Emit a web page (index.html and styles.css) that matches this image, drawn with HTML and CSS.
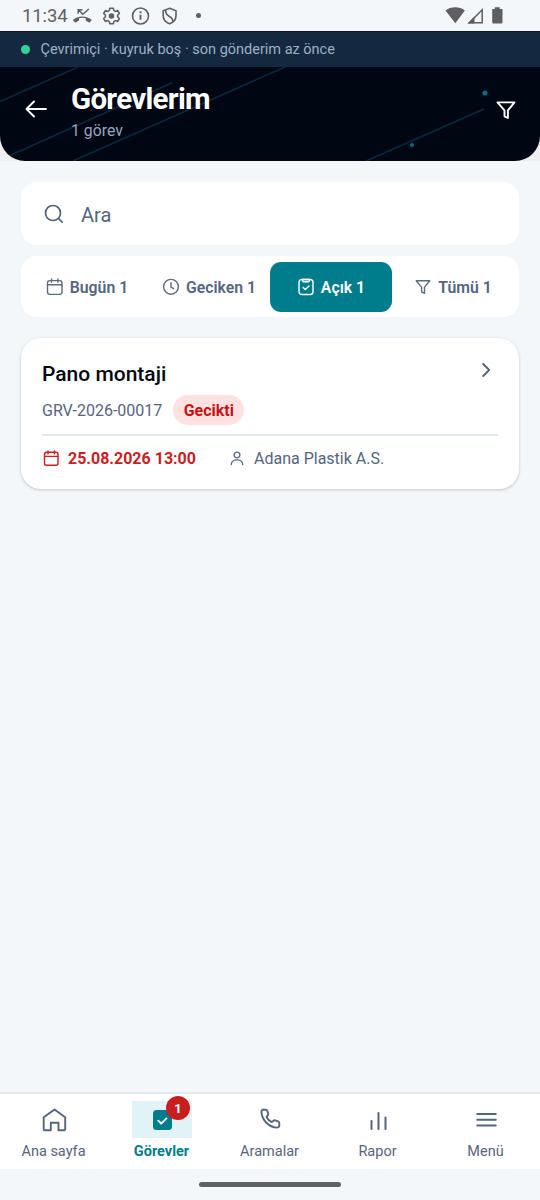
FILE: index.html
```html
<!DOCTYPE html>
<html lang="tr">
<head>
<meta charset="utf-8">
<title>Görevlerim</title>
<link rel="stylesheet" href="styles.css">
</head>
<body>
<div class="screen">
  <div class="status">
    <span class="clock">11:34</span>
    <svg class="status-left" width="140" height="31" viewBox="70 0 140 31" fill="none" stroke="#5f5f61" stroke-width="1.600">
      <path d="M78.200 13.700V9.700h4.300M78.600 10l4.200 4.200 6-5.200" stroke-width="1.500"/>
      <path d="M72.800 20.100c4.900-4.700 14.200-4.700 19.100 0l-2.600 2.700-3.600-2.200v-2.300c-2.200-.7-4.500-.7-6.700 0v2.300l-3.600 2.200z" fill="#5f5f61" stroke="none"/>
      <path d="M109.800 8.200h3.500l.5 2.200 1.700 1 2.200-.8 1.700 2.900-1.700 1.500v2l1.700 1.500-1.700 2.900-2.200-.8-1.700 1-.5 2.200h-3.500l-.5-2.200-1.700-1-2.200.8-1.700-2.900 1.700-1.500v-2l-1.700-1.500 1.700-2.900 2.200.8 1.700-1z" stroke-linejoin="round"/>
      <circle cx="111.500" cy="16" r="2.800" fill="#5f5f61" stroke="none"/>
      <circle cx="140.500" cy="16" r="8"/>
      <path d="M140.500 14.800v5M140.500 11.300v1.900" stroke-width="1.900"/>
      <path d="M169.600 8.300l6.400 2.400v4.800c0 4.300-2.600 7-6.400 8.300-3.800-1.300-6.400-4-6.400-8.300v-4.800zM165.800 9.700c-.6 3.900.7 5.200 3.400 6.600 2.800 1.500 3.800 2.600 3.500 5.400"/>
      <circle cx="198.500" cy="15.500" r="2.500" fill="#5f5f61" stroke="none"/>
    </svg>
    <svg class="status-right" width="60" height="31" viewBox="445 0 60 31" fill="#5f5f61">
      <path d="M445.500 10.500c5.500-4.400 14-4.400 19.400 0L455.300 23.300z"/>
      <path d="M469.300 22.700L482.200 9.700v13z" fill="none" stroke="#5f5f61" stroke-width="1.500"/>
      <path d="M467.500 23.500l7-7v7z"/>
      <path d="M492.200 9h2.500V7.300h5V9h2.800v13.300q0 1.200-1.200 1.200h-7.900q-1.200 0-1.200-1.200z"/>
    </svg>
  </div>

  <div class="online"><i class="online-dot"></i><span>Çevrimiçi · kuyruk boş · son gönderim az önce</span></div>

  <div class="header-wrap">
    <header class="header">
      <svg class="header-art" width="540" height="94" viewBox="0 67 540 94" fill="none">
        <g stroke="#042b3e" stroke-width="1.500">
          <path d="M0 101.500L78 67M10 155.500L172.500 82.500M73 161L285 67M366 161L484 109"/>
        </g>
        <g fill="#056a80"><circle cx="485" cy="93" r="2.600"/><circle cx="412" cy="145" r="2.100"/></g>
      </svg>
      <svg class="back" width="22" height="18" viewBox="25 100 22 18" fill="none" stroke="#fff" stroke-width="1.900" stroke-linecap="round" stroke-linejoin="round"><path d="M46 109H26.500M34 101.500l-7.500 7.500 7.500 7.500"/></svg>
      <div class="titles"><h1 class="title">Görevlerim</h1><p class="subtitle">1 görev</p></div>
      <svg class="header-filter" width="22" height="20" viewBox="495 100 22 20" fill="none" stroke="#fff" stroke-width="1.900" stroke-linejoin="round"><path d="M497.500 102.400h17l-6.600 7.900v7.700l-3.400-1.700v-6z"/></svg>
    </header>
  </div>

  <main class="content">
    <div class="search">
      <svg width="20" height="20" viewBox="44 204 20 20" fill="none" stroke="#50627d" stroke-width="1.700" stroke-linecap="round"><circle cx="53" cy="213" r="7.500"/><path d="M58.500 218.500l3.700 3.700"/></svg>
      <span class="search-text">Ara</span>
    </div>

    <div class="tabs">
      <div class="tab"><svg width="18" height="18" viewBox="0 0 18 18" fill="none" stroke="#5b6c86" stroke-width="1.400" stroke-linecap="round"><rect x="1.500" y="2.600" width="14.500" height="13.800" rx="2.300"/><path d="M1.500 6.700h14.500M5.500 1v3.300M12 1v3.300"/></svg><span>Bugün 1</span></div>
      <div class="tab"><svg width="18" height="18" viewBox="0 0 18 18" fill="none" stroke="#5b6c86" stroke-width="1.400" stroke-linecap="round"><circle cx="9" cy="8.800" r="7.400"/><path d="M9 4.600V9l2.600 1.600"/></svg><span>Geciken 1</span></div>
      <div class="tab tab-active"><svg width="18" height="18" viewBox="0 0 18 18" fill="none" stroke="#fff" stroke-width="1.400" stroke-linecap="round" stroke-linejoin="round"><rect x="2" y="1.500" width="14" height="15" rx="2.800"/><path d="M5.700 1.500v1.200q0 1 1 1h4.600q1 0 1-1V1.500zM6.200 9.500l2.100 2.100 3.700-3.700"/></svg><span>Açık 1</span></div>
      <div class="tab"><svg width="18" height="18" viewBox="0 0 18 18" fill="none" stroke="#5b6c86" stroke-width="1.400" stroke-linejoin="round"><path d="M2.200 2.800h13.600l-5.300 6.300v6.200l-2.900-1.500V9.100z"/></svg><span>Tümü 1</span></div>
    </div>

    <article class="card">
      <div class="card-top"><h2 class="card-title">Pano montaji</h2>
        <svg class="chevron" width="10" height="16" viewBox="0 0 10 16" fill="none" stroke="#50627d" stroke-width="1.800" stroke-linecap="round" stroke-linejoin="round"><path d="M1.200 2l6 6-6 6"/></svg>
      </div>
      <div class="card-code"><span class="code">GRV-2026-00017</span><span class="pill"><span>Gecikti</span></span></div>
      <div class="card-meta">
        <svg width="18" height="18" viewBox="0 0 18 18" fill="none" stroke="#c81e1e" stroke-width="1.400" stroke-linecap="round"><rect x="2.500" y="2.300" width="13.500" height="13" rx="2"/><path d="M2.500 6.400h13.500M6 .9v3M12.500 .9v3"/></svg>
        <span class="date">25.08.2026 13:00</span>
        <svg class="person" width="14" height="16" viewBox="0 0 14 16" fill="none" stroke="#5b6c86" stroke-width="1.400" stroke-linecap="round"><circle cx="7" cy="4" r="2.900"/><path d="M1.300 13.600c0-6.300 11.400-6.300 11.400 0"/></svg>
        <span class="customer">Adana Plastik A.S.</span>
      </div>
    </article>
  </main>

  <nav class="nav">
    <div class="nav-item"><div class="nav-icon"><svg width="60" height="37" viewBox="24 1101 60 37" fill="none" stroke="#55657f" stroke-width="1.900" stroke-linejoin="round"><path d="M43.700 1117.200L54.500 1109.400l10.700 7.800v12q0 1-1 1h-5.700v-7.400h-7.700v7.400h-6.100q-1 0-1-1z"/></svg></div><span class="nav-label">Ana sayfa</span></div>
    <div class="nav-item nav-active"><div class="nav-icon"><svg width="60" height="37" viewBox="132 1101 60 37" fill="none" stroke="#fff" stroke-width="1.800" stroke-linecap="round" stroke-linejoin="round"><rect x="153" y="1110" width="19" height="20" rx="3.500" fill="#007d8c" stroke="none"/><path d="M158.300 1120.700l2.900 2.900 5.300-5.200"/></svg><span class="badge"><span>1</span></span></div><span class="nav-label">Görevler</span></div>
    <div class="nav-item"><div class="nav-icon"><svg width="60" height="37" viewBox="240 1101 60 37" fill="none" stroke="#55657f" stroke-width="1.900" stroke-linejoin="round"><path d="M263 1109.700l2.700-.1c.8 0 1.300.3 1.500 1l1 3.100c.2.700 0 1.300-.5 1.800l-1.200 1.300c1.100 2.400 2.900 4.200 5.300 5.300l1.700-1.400c.6-.5 1.200-.6 1.800-.4l2.800 1c.8.300 1.200.8 1.200 1.600v2.500c0 1.500-1 2.300-2.400 2.200-8-.5-14.800-7.200-15.500-15.500-.1-1.300.4-2.100 1.600-2.400z"/></svg></div><span class="nav-label">Aramalar</span></div>
    <div class="nav-item"><div class="nav-icon"><svg width="60" height="37" viewBox="348 1101 60 37" fill="none" stroke="#55657f" stroke-width="2" stroke-linecap="round"><path d="M371.500 1121v8M378.500 1113v16M385.500 1117.500v11.500"/></svg></div><span class="nav-label">Rapor</span></div>
    <div class="nav-item"><div class="nav-icon"><svg width="60" height="37" viewBox="456 1101 60 37" fill="none" stroke="#55657f" stroke-width="1.900" stroke-linecap="round"><path d="M477.200 1114h18.600M477.200 1119.800h18.600M477.200 1125.500h18.600"/></svg></div><span class="nav-label">Menü</span></div>
  </nav>
  <div class="gesture"><i class="gesture-bar"></i></div>
</div>
</body>
</html>
```
FILE: styles.css
```css
* { box-sizing: border-box; }
body { margin: 0; font-family: Roboto, sans-serif; color: #55657f; background: #f3f7fa; }
svg { display: block; flex: none; }
.screen { width: 540px; height: 1200px; display: flex; flex-direction: column; overflow: hidden; white-space: nowrap; }

.status { height: 31px; flex: none; display: flex; padding: 0 35px 0 22px; }
.clock { width: 48px; font-size: 18.500px; line-height: 32px; letter-spacing: -.1px; color: #5f5f61; }
.status-right { margin-left: auto; }

.online { height: 36px; flex: none; display: flex; align-items: center; gap: 10.500px; padding-left: 21px; background: #14293f; color: #9fb0c6; font-size: 14.500px; border-top: 1px solid #0a1828; }
.online-dot { width: 9px; height: 9px; border-radius: 50%; background: #34d399; }

.header-wrap { flex: none; background: #efefef; }
.header { position: relative; height: 94px; display: flex; background: #010613; border-radius: 0 0 25px 25px; overflow: hidden; padding: 0 23px 0 25px; }
.header-art { position: absolute; left: 0; top: 0; }
.back { position: relative; margin-top: 33px; }
.titles { position: relative; margin-left: 24px; }
.title { margin: 15px 0 0; font-size: 29.500px; line-height: 35px; letter-spacing: -.7px; font-weight: 700; color: #fff; }
.subtitle { margin: 4px 0 0; font-size: 15.800px; line-height: 20px; color: #94a6be; }
.header-filter { position: relative; margin: 33px 0 0 auto; }

.content { flex: 1; padding: 21px 21px 0; }
.search { height: 63px; display: flex; align-items: center; gap: 17px; padding: 0 23px; background: #fff; border-radius: 16px; }
.search-text { font-size: 20px; line-height: 24px; padding-top: 2px; }
.tabs { display: grid; grid-template-columns: repeat(4, 1fr); height: 61px; margin-top: 11px; padding: 6px 5px 5px; background: #fff; border-radius: 16px; }
.tab { display: flex; align-items: center; justify-content: center; gap: 6px; border-radius: 11px; font-size: 15.800px; font-weight: 600; color: #55657f; }
.tab-active { background: #007d8c; color: #fff; }

.card { height: 151px; margin-top: 21px; padding: 21px; background: #fff; border-radius: 20px; box-shadow: 0 1px 3px rgba(30, 50, 75, .25); }
.card-top { display: flex; justify-content: space-between; height: 30px; }
.card-title { margin: 0; font-size: 21px; line-height: 30px; font-weight: 500; color: #030712; }
.chevron { margin: 3px 6px 0 0; }
.card-code { display: flex; align-items: center; gap: 11px; height: 30px; margin-top: 6px; }
.code { font-size: 16px; }
.pill { display: flex; align-items: center; justify-content: center; width: 71px; height: 30px; border-radius: 15px; background: #fee2e2; color: #c81212; font-size: 16px; font-weight: 700; }
.card-meta { display: flex; align-items: center; height: 38px; margin-top: 9px; border-top: 2px solid #e2e8f0; padding-top: 9px; font-size: 16px; }
.date { width: 128px; margin-left: 8px; color: #c81e1e; font-weight: 700; }
.person { margin-left: 34px; }
.customer { margin-left: 10px; }

.nav { height: 77px; flex: none; display: grid; grid-template-columns: repeat(5, 1fr); background: #fff; border-top: 2px solid #e2e8f0; }
.nav-item { display: flex; flex-direction: column; align-items: center; padding-top: 7px; }
.nav-icon { position: relative; width: 60px; height: 37px; }
.nav-active .nav-icon { background: #e1f3f6; }
.nav-label { margin: 5px 1px 0 0; font-size: 14.500px; line-height: 18px; }
.nav-active .nav-label { color: #007d8c; font-weight: 700; }
.badge { position: absolute; left: 34px; top: -5px; width: 24px; height: 24px; border-radius: 50%; background: #c81e1e; color: #fff; display: flex; align-items: center; justify-content: center; font-size: 13px; font-weight: 700; }
.gesture { height: 31px; flex: none; display: flex; justify-content: center; padding-top: 13px; }
.gesture-bar { width: 142px; height: 5px; border-radius: 3px; background: #606164; }
```
